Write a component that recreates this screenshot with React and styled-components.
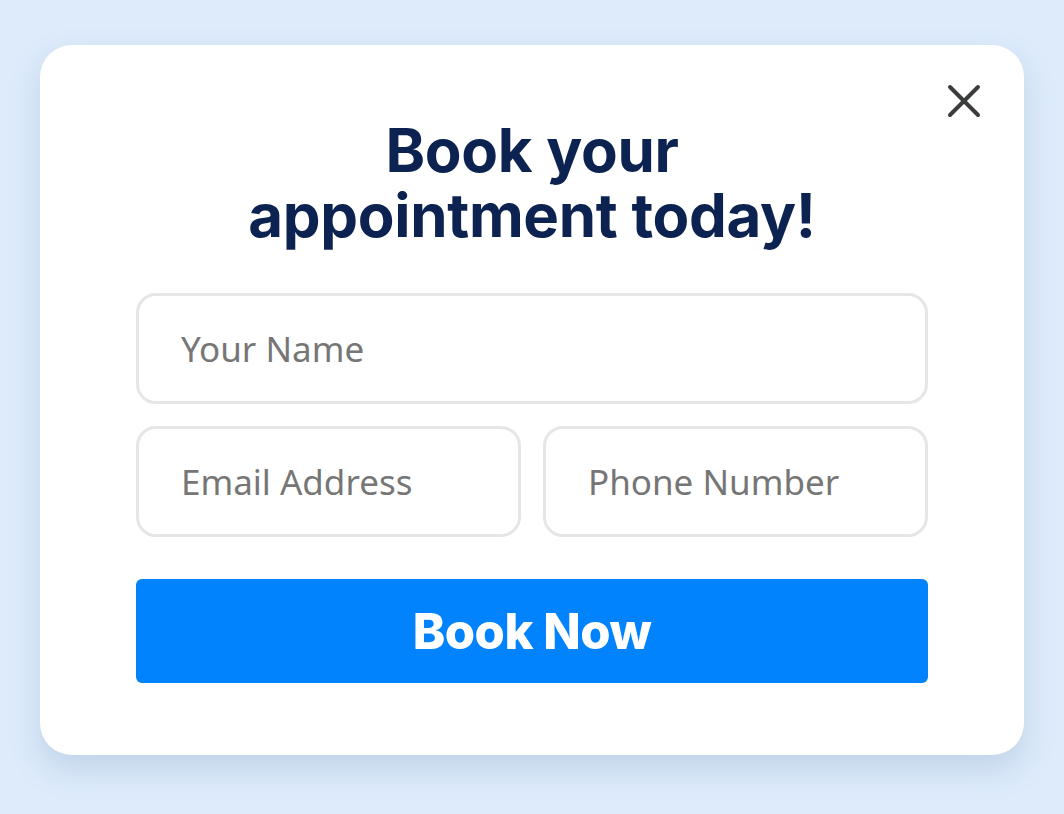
import React from "react";
import styled, { createGlobalStyle } from "styled-components";

const Global = createGlobalStyle`
  html, body {
    margin: 0;
    background: #ddebfb;
  }
  * { box-sizing: border-box; }
`;

const Page = styled.div`
  width: 1064px;
  height: 814px;
  padding: 45px 40px 0 40px;
`;

const Card = styled.div`
  position: relative;
  width: 984px;
  height: 710px;
  background: #fff;
  border-radius: 32px;
  box-shadow: 0 14px 30px rgba(120, 150, 190, 0.28);
  padding: 73px 96px 0 96px;
  display: flex;
  flex-direction: column;
`;

const Close = styled.button`
  position: absolute;
  top: 38px;
  right: 42px;
  width: 36px;
  height: 36px;
  padding: 0;
  border: 0;
  background: none;
  cursor: pointer;
  svg { display: block; }
`;

const Title = styled.h1`
  margin: 0 0 45px;
  text-align: center;
  font-family: Inter, "Noto Sans", sans-serif;
  font-weight: 700;
  font-size: 60px;
  line-height: 65px;
  letter-spacing: -0.3px;
  color: #0c2250;
`;

const Form = styled.form`
  display: flex;
  flex-direction: column;
  gap: 22px;
`;

const Row = styled.div`
  display: grid;
  grid-template-columns: 1fr 1fr;
  gap: 22px;
`;

const Field = styled.input`
  width: 100%;
  height: 111px;
  border: 3px solid #e6e6e6;
  border-radius: 20px;
  padding: 0 0 0 42px;
  font-family: "Noto Sans", "Open Sans", sans-serif;
  font-size: 35px;
  color: #333;
  outline: none;
  &::placeholder { color: #767676; }
`;

const Submit = styled.button`
  margin-top: 20px;
  height: 104px;
  border: 0;
  border-radius: 6px;
  background: #0183fd;
  color: #fff;
  font-family: Inter, "Noto Sans", sans-serif;
  font-weight: 800;
  font-size: 49px;
  letter-spacing: -0.5px;
  cursor: pointer;
`;

export default function App() {
  return (
    <Page>
      <Global />
      <Card>
        <Close aria-label="Close">
          <svg width="36" height="36" viewBox="0 0 36 36">
            <path d="M4 4 L32 32 M32 4 L4 32" stroke="#3b3c3e" strokeWidth="4" strokeLinecap="round" />
          </svg>
        </Close>
        <Title>Book your<br />appointment today!</Title>
        <Form onSubmit={(e) => e.preventDefault()}>
          <Field placeholder="Your Name" />
          <Row>
            <Field placeholder="Email Address" />
            <Field placeholder="Phone Number" />
          </Row>
          <Submit type="submit">Book Now</Submit>
        </Form>
      </Card>
    </Page>
  );
}
